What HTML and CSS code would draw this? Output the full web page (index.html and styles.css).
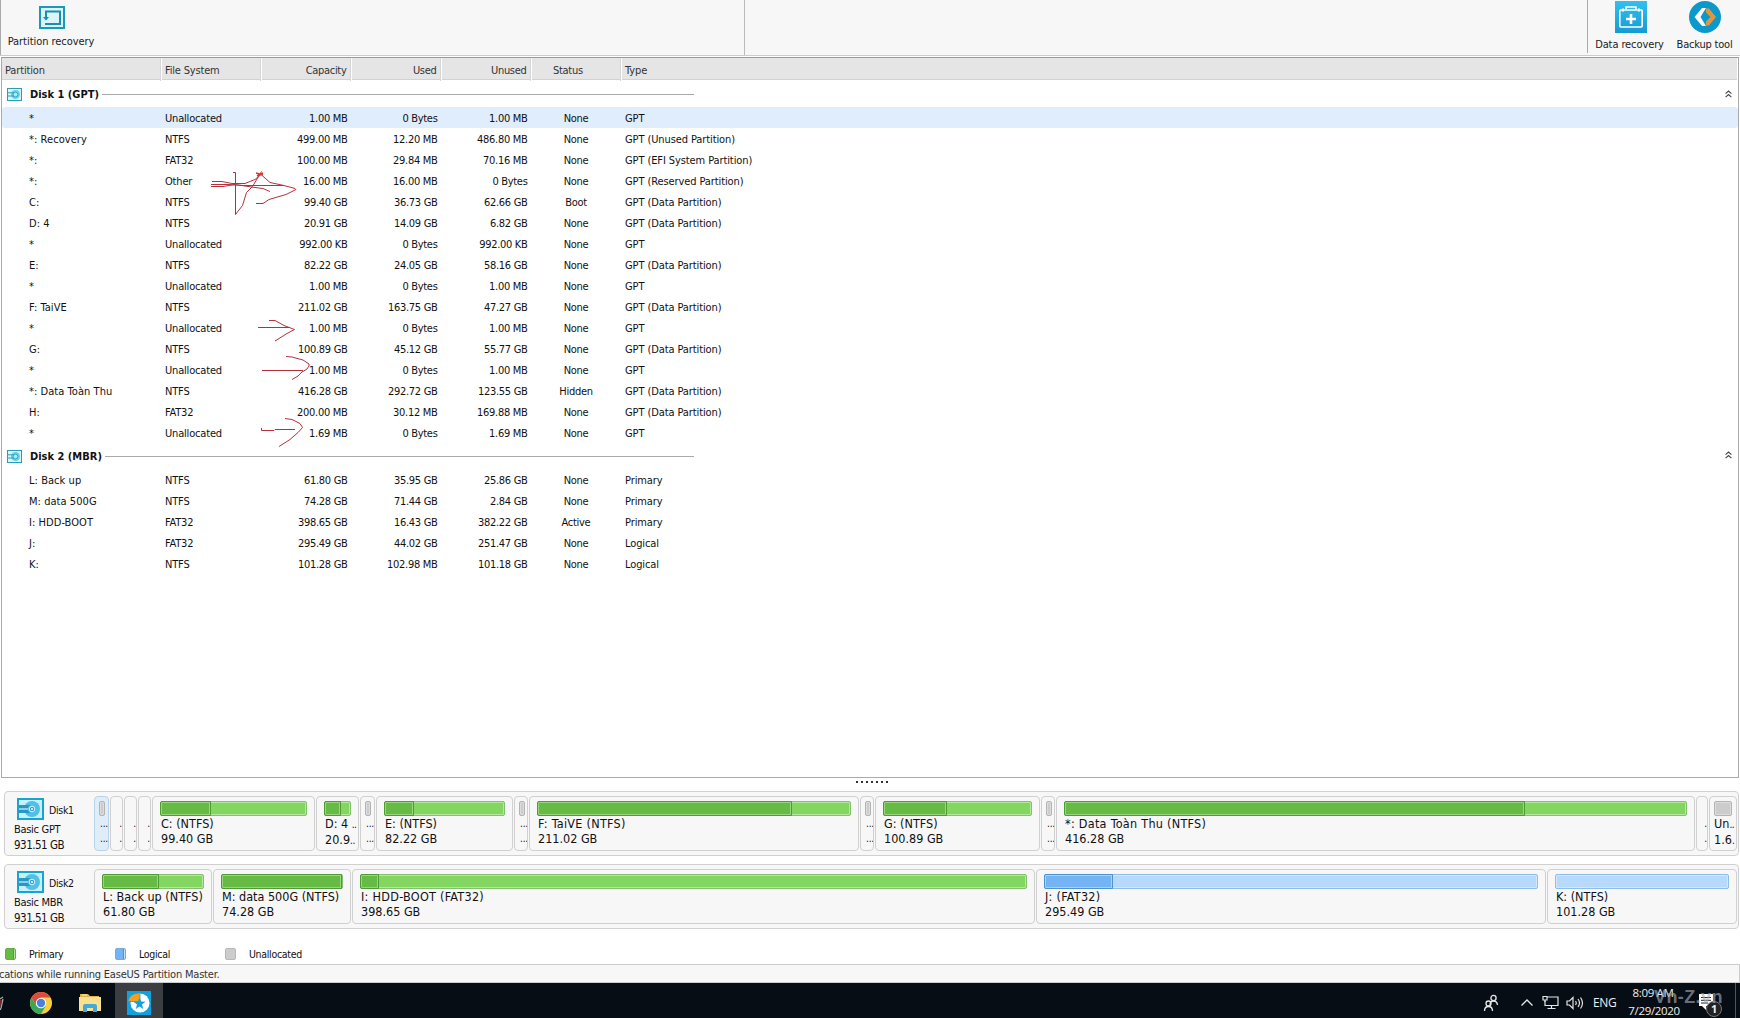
FILE: index.html
```html
<!DOCTYPE html>
<html lang="en">
<head>
<meta charset="utf-8">
<title>Partition Master</title>
<link rel="stylesheet" href="styles.css">
</head>
<body>
<svg class="defs" aria-hidden="true">
  <symbol id="disk" viewBox="0 0 27 22">
    <rect x="1" y="1" width="25" height="20" fill="#c4f1fc" stroke="#17a5cf" stroke-width="2"/>
    <circle cx="15" cy="11" r="8" fill="#54bfe6"/>
    <path d="M2 7h13v8H2z" fill="#2b96bf"/><path d="M2 11h11" stroke="#b5eafa" stroke-width="1.4"/>
    <circle cx="15" cy="11" r="4" fill="#54bfe6" /><circle cx="15" cy="11" r="2.8" fill="#2fa3d0" stroke="#d7f6ff" stroke-width="1"/><circle cx="15" cy="11" r="1" fill="#fff"/>
  </symbol>
  <symbol id="disk-small" viewBox="0 0 15 13">
    <rect x=".5" y=".5" width="14" height="12" fill="#d5f5fc" stroke="#2a9db5"/>
    <circle cx="8.5" cy="6.5" r="4.5" fill="#6fd0e8"/><path d="M1 4.8h7M1 8h7" stroke="#2a9db5"/><circle cx="8.5" cy="6.5" r="2.4" fill="#a9eaf7" stroke="#2fa9c6"/>
  </symbol>
  <symbol id="fold" viewBox="0 0 7 8"><path d="M.6 3.6 3.5 1l2.9 2.6M.6 7.2l2.9-2.6 2.9 2.6" fill="none" stroke="#444" stroke-width="1.1"/></symbol>
</svg>

<header class="toolbar">
  <div class="group group-left">
    <div class="tool tool-partition">
      <svg width="26" height="24" viewBox="0 0 26 24"><rect x="1" y="1" width="24" height="21" fill="#d9f5fa" stroke="#1c98b8" stroke-width="2"/><path d="M6 18h15V5.500H7v8" fill="none" stroke="#1c8eae" stroke-width="2"/><path d="M4 11l3 3.500 3-3.500z" fill="#1c8eae"/></svg>
      <span>Partition recovery</span>
    </div>
  </div>
  <div class="group group-mid"></div>
  <div class="group group-right">
    <div class="tool tool-data">
      <svg width="32" height="32" viewBox="0 0 32 32"><defs><linearGradient id="g" x1="0" y1="0" x2="0" y2="1"><stop offset="0" stop-color="#31c0f0"/><stop offset="1" stop-color="#169bd3"/></linearGradient></defs><rect width="32" height="32" fill="url(#g)"/><path d="M11 9V6h10v3" fill="none" stroke="#fff" stroke-width="1.6"/><rect x="4.800" y="9" width="22.400" height="17" rx="1" fill="none" stroke="#fff" stroke-width="1.600"/><path d="M8 7.500v3M24 7.500v3" stroke="#fff" stroke-width="2"/><path d="M16 13v10M11 18h10" stroke="#fff" stroke-width="2.600"/></svg>
      <span>Data recovery</span>
    </div>
    <div class="tool tool-backup">
      <svg width="32" height="32" viewBox="0 0 32 32"><circle cx="16" cy="16" r="16" fill="#0b98cb"/><path d="M17 7h-4l-7.500 9 7.500 9h4l-5.500-9z" fill="#fff"/><path d="M17 7.500h3l7 8.500-7 8.500h-3v-4l4.500-4.500-4.500-4.500z" fill="#e0963c"/></svg>
      <span>Backup tool</span>
    </div>
  </div>
</header>

<main class="panel">
  <div class="cols head"><span>Partition</span><span>File System</span><span>Capacity</span><span>Used</span><span>Unused</span><span>Status</span><span>Type</span></div>

  <div class="disk-title first"><div class="lead"><svg width="15" height="13"><use href="#disk-small"/></svg><b>Disk 1 (GPT)</b><i></i></div><svg class="fold" width="7" height="8"><use href="#fold"/></svg></div>
  <div class="cols row selected"><span>*</span><span>Unallocated</span><span>1.00 MB</span><span>0 Bytes</span><span>1.00 MB</span><span>None</span><span>GPT</span></div>
  <div class="cols row"><span>*: Recovery</span><span>NTFS</span><span>499.00 MB</span><span>12.20 MB</span><span>486.80 MB</span><span>None</span><span>GPT (Unused Partition)</span></div>
  <div class="cols row"><span>*:</span><span>FAT32</span><span>100.00 MB</span><span>29.84 MB</span><span>70.16 MB</span><span>None</span><span>GPT (EFI System Partition)</span></div>
  <div class="cols row"><span>*:</span><span>Other</span><span>16.00 MB</span><span>16.00 MB</span><span>0 Bytes</span><span>None</span><span>GPT (Reserved Partition)</span></div>
  <div class="cols row"><span>C:</span><span>NTFS</span><span>99.40 GB</span><span>36.73 GB</span><span>62.66 GB</span><span>Boot</span><span>GPT (Data Partition)</span></div>
  <div class="cols row"><span>D: 4</span><span>NTFS</span><span>20.91 GB</span><span>14.09 GB</span><span>6.82 GB</span><span>None</span><span>GPT (Data Partition)</span></div>
  <div class="cols row"><span>*</span><span>Unallocated</span><span>992.00 KB</span><span>0 Bytes</span><span>992.00 KB</span><span>None</span><span>GPT</span></div>
  <div class="cols row"><span>E:</span><span>NTFS</span><span>82.22 GB</span><span>24.05 GB</span><span>58.16 GB</span><span>None</span><span>GPT (Data Partition)</span></div>
  <div class="cols row"><span>*</span><span>Unallocated</span><span>1.00 MB</span><span>0 Bytes</span><span>1.00 MB</span><span>None</span><span>GPT</span></div>
  <div class="cols row"><span>F: TaiVE</span><span>NTFS</span><span>211.02 GB</span><span>163.75 GB</span><span>47.27 GB</span><span>None</span><span>GPT (Data Partition)</span></div>
  <div class="cols row"><span>*</span><span>Unallocated</span><span>1.00 MB</span><span>0 Bytes</span><span>1.00 MB</span><span>None</span><span>GPT</span></div>
  <div class="cols row"><span>G:</span><span>NTFS</span><span>100.89 GB</span><span>45.12 GB</span><span>55.77 GB</span><span>None</span><span>GPT (Data Partition)</span></div>
  <div class="cols row"><span>*</span><span>Unallocated</span><span>1.00 MB</span><span>0 Bytes</span><span>1.00 MB</span><span>None</span><span>GPT</span></div>
  <div class="cols row"><span>*: Data Toàn Thu</span><span>NTFS</span><span>416.28 GB</span><span>292.72 GB</span><span>123.55 GB</span><span>Hidden</span><span>GPT (Data Partition)</span></div>
  <div class="cols row"><span>H:</span><span>FAT32</span><span>200.00 MB</span><span>30.12 MB</span><span>169.88 MB</span><span>None</span><span>GPT (Data Partition)</span></div>
  <div class="cols row"><span>*</span><span>Unallocated</span><span>1.69 MB</span><span>0 Bytes</span><span>1.69 MB</span><span>None</span><span>GPT</span></div>

  <div class="disk-title"><div class="lead"><svg width="15" height="13"><use href="#disk-small"/></svg><b>Disk 2 (MBR)</b><i></i></div><svg class="fold" width="7" height="8"><use href="#fold"/></svg></div>
  <div class="cols row"><span>L: Back up</span><span>NTFS</span><span>61.80 GB</span><span>35.95 GB</span><span>25.86 GB</span><span>None</span><span>Primary</span></div>
  <div class="cols row"><span>M: data 500G</span><span>NTFS</span><span>74.28 GB</span><span>71.44 GB</span><span>2.84 GB</span><span>None</span><span>Primary</span></div>
  <div class="cols row"><span>I: HDD-BOOT</span><span>FAT32</span><span>398.65 GB</span><span>16.43 GB</span><span>382.22 GB</span><span>Active</span><span>Primary</span></div>
  <div class="cols row"><span>J:</span><span>FAT32</span><span>295.49 GB</span><span>44.02 GB</span><span>251.47 GB</span><span>None</span><span>Logical</span></div>
  <div class="cols row"><span>K:</span><span>NTFS</span><span>101.28 GB</span><span>102.98 MB</span><span>101.18 GB</span><span>None</span><span>Logical</span></div>
</main>

<div class="splitter"><i></i><i></i><i></i><i></i><i></i><i></i><i></i></div>

<section class="map">
  <div class="disk">
    <div class="info"><div class="name"><svg width="27" height="22"><use href="#disk"/></svg><span>Disk1</span></div><div>Basic GPT</div><div class="total">931.51 GB</div></div>
    <div class="parts parts-1">
      <div class="part tiny active"><div class="bar free"></div><p>...</p><p>...</p></div>
      <div class="part tiny"><p class="below">.</p><p>.</p></div>
      <div class="part tiny"><p class="below">.</p><p>.</p></div>
      <div class="part tiny"><p class="below">.</p><p>.</p></div>
      <div class="part"><div class="bar"><i style="width:51px"></i></div><p>C: (NTFS)</p><p>99.40 GB</p></div>
      <div class="part"><div class="bar"><i style="width:17px"></i></div><p>D: 4 <s>..</s></p><p>20.9<s>..</s></p></div>
      <div class="part tiny"><div class="bar free"></div><p>...</p><p>...</p></div>
      <div class="part"><div class="bar"><i style="width:30px"></i></div><p>E: (NTFS)</p><p>82.22 GB</p></div>
      <div class="part tiny"><div class="bar free"></div><p>...</p><p>...</p></div>
      <div class="part"><div class="bar"><i style="width:255px"></i></div><p class="wide">F: TaiVE (NTFS)</p><p>211.02 GB</p></div>
      <div class="part tiny"><div class="bar free"></div><p>...</p><p>...</p></div>
      <div class="part"><div class="bar"><i style="width:64px"></i></div><p>G: (NTFS)</p><p>100.89 GB</p></div>
      <div class="part tiny"><div class="bar free"></div><p>...</p><p>...</p></div>
      <div class="part"><div class="bar"><i style="width:461px"></i></div><p class="wide">*: Data Toàn Thu (NTFS)</p><p>416.28 GB</p></div>
      <div class="part tiny"><p class="below">.</p><p>.</p></div>
      <div class="part last"><div class="bar free"></div><p>Un<s>..</s></p><p>1.6<s>.</s></p></div>
    </div>
  </div>
  <div class="disk">
    <div class="info"><div class="name"><svg width="27" height="22"><use href="#disk"/></svg><span>Disk2</span></div><div>Basic MBR</div><div class="total">931.51 GB</div></div>
    <div class="parts parts-2">
      <div class="part"><div class="bar"><i style="width:57px"></i></div><p>L: Back up (NTFS)</p><p>61.80 GB</p></div>
      <div class="part"><div class="bar"><i style="width:121px"></i></div><p>M: data 500G (NTFS)</p><p>74.28 GB</p></div>
      <div class="part"><div class="bar"><i style="width:19px"></i></div><p class="wide">I: HDD-BOOT (FAT32)</p><p>398.65 GB</p></div>
      <div class="part"><div class="bar logical"><i style="width:69px"></i></div><p class="wide">J: (FAT32)</p><p>295.49 GB</p></div>
      <div class="part"><div class="bar logical"></div><p>K: (NTFS)</p><p>101.28 GB</p></div>
    </div>
  </div>
</section>

<div class="legend">
  <span><i class="swatch primary"></i>Primary</span>
  <span><i class="swatch logic"></i>Logical</span>
  <span><i class="swatch unalloc"></i>Unallocated</span>
</div>

<div class="statusbar"><span>cations while running EaseUS Partition Master.</span></div>

<footer class="taskbar">
  <svg class="edge" width="5" height="22" viewBox="0 0 5 22"><path d="M0 8l3-2M3 8L1 17 0 19" fill="none" stroke="#aaa" stroke-width="1.300"/><path d="M0 9h2l-1 6H0z" fill="#7b2b2b"/></svg>
  <svg class="chrome" width="22" height="22" viewBox="0 0 22 22"><circle cx="11" cy="11" r="11" fill="#f7cf3c"/><path d="M1.500 5.500A11 11 0 0 1 20.500 5.500H11L6.300 13.700z" fill="#dc4b3e"/><path d="M1.500 5.500A11 11 0 0 0 11 22l4.800-8.300H6.200z" fill="#3aa757"/><circle cx="11" cy="11" r="5.200" fill="#fff"/><circle cx="11" cy="11" r="4.200" fill="#4a7fe8"/></svg>
  <svg class="folder" width="22" height="20" viewBox="0 0 22 20"><path d="M1 1h8l2 2h9v3H1z" fill="#e0b447"/><path d="M3 2h5" stroke="#fff3c0"/><path d="M0 4h22v14H0z" fill="#fbe08f"/><path d="M4 19v-6q0-2 2-2h10q2 0 2 2v6h-4v-4H8v4z" fill="#43a9d8"/></svg>
  <div class="task"><svg width="24" height="24" viewBox="0 0 24 24"><rect width="24" height="24" fill="#10a2e0"/><circle cx="13" cy="12" r="9.500" fill="#fff"/><path d="M13 10.500V2.500C7 2 2 5 1.500 10.500z" fill="#f4a01c"/><path d="M1.500 10.500H13V2" fill="none" stroke="#10a2e0" stroke-width=".8"/><path d="M12.500 6.500l1.500 4 4.500.3-3.500 2.800 1.200 4.400-3.700-2.400L8.800 18l1.200-4.400-3.500-2.800 4.500-.3z" fill="#10a2e0"/></svg></div>
  <div class="tray">
    <svg width="16" height="18" viewBox="0 0 16 18" fill="none" stroke="#e6e6e6" stroke-width="1.300"><circle cx="10.500" cy="4" r="2.600"/><path d="M7 11q0-4 3.500-4T14.500 11"/><circle cx="5.500" cy="9.500" r="2.500"/><path d="M1.500 17q0-4.500 4-4.500t4 4.500"/></svg>
    <svg width="14" height="9" viewBox="0 0 14 9" fill="none" stroke="#e6e6e6" stroke-width="1.300"><path d="M1.500 7.500L7 2l5.500 5.500"/></svg>
    <svg width="17" height="15" viewBox="0 0 17 15" fill="none" stroke="#e6e6e6" stroke-width="1.200"><path d="M5 2h11v8.500H3V6M9.500 10.500v3M5.500 13.500h8"/><path d="M1 1.500h4V5H1zM3 5v2"/></svg>
    <svg width="18" height="14" viewBox="0 0 18 14" fill="none" stroke="#e6e6e6" stroke-width="1.200"><path d="M1 5h2.500L7 1.500v11L3.500 9H1zM9.500 5q1.500 2 0 4M12 3q3 4 0 8M14.500 1.500q4 5.500 0 11"/></svg>
    <span class="lang">ENG</span>
    <div class="clock"><span>8:09 AM</span><span>7/29/2020</span></div>
    <div class="notify"><svg width="15" height="17" viewBox="0 0 15 17"><path d="M0 0h14v12h-7v4l-4-4H0z" fill="#fff"/><path d="M2 3.500h10M2 6.300h10M2 9h7" stroke="#18202a"/></svg><b>1</b></div>
    <i class="desktop"></i>
  </div>
  <span class="watermark">Vn-Z.vn</span>
</footer>

<svg class="marks" width="120" height="290" viewBox="200 165 120 290" fill="none" stroke="#b5303c" stroke-width="1">
  <path d="M212 181.500h10l10 2h13l10-4 6-5 9 8 14 3 11 3 1 1-10 5-17 5-6 4h-7M211 184.500h17l15 1h41M211 186.500h12l12-2 20 3 8 1 7 3M233 172.500h2.500v42l7-9 4-13 6-6 9-15" />
  <path d="M256 173l7 2M257 176l6-3" stroke="#dd3528" stroke-width="1.600"/>
  <path d="M258 327.500h32M269 320.500h6l9 5 10.500 4-7.500 4-12 7.500M262 370.500h41M286 356.500l6 .5 11 3 6 4v2l-2 3-5 3-4 4-6 3.500M261.500 428v2.500h12.500l1-1h20M285 418.500l7 1 8 4 2.500 4-4.500 5-8 7-11 7"/>
</svg>
</body>
</html>
```
FILE: styles.css
```css
* { box-sizing: border-box; }
body {
  margin: 0; width: 1740px; height: 1018px; overflow: hidden; position: relative;
  display: flex; flex-direction: column; background: #fff; color: #111;
  font: 11px/13px "DejaVu Sans Condensed", "DejaVu Sans", sans-serif; font-stretch: condensed;
  letter-spacing: -0.3px;
}
.defs { position: absolute; width: 0; height: 0; }
svg { display: block; flex: none; }
p { margin: 0; }

.toolbar { height: 56px; display: flex; background: #f7f7f7; border-bottom: 1px solid #ccc; flex: none; }
.group-left { width: 745px; border-left: 1px solid #aaa; border-right: 1px solid #bbb; padding: 6px 0 0 7px; }
.group-mid { width: 843px; height: 53px; border-right: 1px solid #aaa; }
.group-right { display: flex; flex: 1; padding: 1px 0 0 7px; gap: 13px; }
.tool { display: flex; flex-direction: column; align-items: center; gap: 5px; white-space: nowrap; color: #222; }
.tool-partition { width: 86px; letter-spacing: -0.05px; }
.tool-partition svg { margin-right: -1px; }
.tool-data { width: 69px; }
.tool-data svg { margin-right: -2px; }
.tool-backup { width: 55px; }
.tool-data, .tool-backup { letter-spacing: -0.1px; }
.tool-backup { letter-spacing: -0.2px; }

.panel { flex: none; height: 721px; margin: 1px 1px 0; border: 1px solid #aaa; border-top-color: #999; }
.cols { display: grid; grid-template-columns: 160px 100px 90px 90px 90px 90px 1fr; align-items: center; white-space: nowrap; }
.cols > :nth-child(n+3):nth-child(-n+5) { text-align: right; padding-right: 4.500px; }
.cols > :nth-child(2), .cols > :nth-child(7) { padding-left: 3px; }
.cols > :nth-child(2) { letter-spacing: -0.18px; }
.cols > :nth-child(7) { letter-spacing: -0.1px; }
.head { height: 22px; background: #e5e5e5; border-bottom: 1px solid #d2d2d2; color: #333; margin-right: 1px; align-items: stretch; line-height: 21px; }
.head > span { border-right: 1px solid #fff; box-shadow: -1px 0 #d6d6d6 inset; padding-top: 2px; }
.head > :first-child { padding-left: 3px; letter-spacing: -0.15px; }
.head > :nth-child(6) { padding-left: 21px; }
.head > :last-child { border: 0; box-shadow: none; }
.disk-title { display: flex; align-items: center; justify-content: space-between; height: 26px; padding: 0 6px 0 5px; }
.first { height: 27px; padding-top: 2px; }
.lead { display: flex; align-items: center; width: 687px; }
.lead b { margin: 0 3px 0 8px; letter-spacing: 0; }
.lead i { height: 1px; background: #aaa; flex: 1; }
.fold { margin-bottom: 2px; }
.row { height: 21px; padding-top: 2px; }
.row > :first-child { padding-left: 27px; letter-spacing: 0.05px; }
.row > :nth-child(6) { text-align: center; padding-right: 2px; }
.selected { background: #e0edfd; border-radius: 3px; }

.splitter { flex: none; height: 13px; display: flex; gap: 3px; padding: 3px 0 0 856px; }
.splitter i { width: 2px; height: 2px; background: #333; }

.map { flex: none; display: flex; flex-direction: column; gap: 8px; padding: 0 1px 0 4px; }
.disk { display: flex; height: 65px; border: 1px solid #d0d0d0; border-radius: 4px; background: #f7f7f7; }
.info { width: 89px; padding: 6px 0 0 9px; display: flex; flex-direction: column; gap: 3px; }
.name { display: flex; align-items: center; height: 22px; gap: 5px; padding-left: 3px; font-size: 10.500px; }
.name span { padding-top: 2px; }
.total { font-size: 11.500px; letter-spacing: -0.5px; }
.parts { flex: 1; display: grid; gap: 1px; padding-top: 4px; }
.parts-1 { grid-template-columns: 15px 13px 13px 13px 163px 43px 15px 137px 14px 330px 14px 165px 14px 639px 12px 28px; }
.parts-2 { grid-template-columns: 118px 138px 683px 510px 190px; }
.part { height: 55px; border: 1px solid #d0d0d0; border-radius: 4px; padding: 4px 7px 0; white-space: nowrap; overflow: hidden; font-size: 12.500px; line-height: 15px; letter-spacing: 0; }
.part p { padding-left: 1px; }
.part .wide { letter-spacing: 0.28px; }
.part s { text-decoration: none; font-size: 10px; letter-spacing: -0.5px; }
.bar { height: 15px; display: flex; background: #83d660; border: 1px solid #85bf70; border-radius: 2px; box-shadow: inset 0 0 0 1px #b4e8a0; }
.bar i { margin: -1px 0 -1px -1px; border: 1px solid #529a38; border-radius: 2px 0 0 2px; background: #65bb43; box-shadow: inset 0 0 0 1px #99d581; }
.logical { background: #b6d9fc; border-color: #8dbde8; box-shadow: inset 0 0 0 1px #d2e8ff; }
.logical i { background: #74b3f4; border-color: #4d94cf; box-shadow: inset 0 0 0 1px #a8d2fc; }
.free { background: #ccc; border-color: #b3b3b3; box-shadow: inset 0 0 0 1px #ddd; }
.part.tiny { padding: 4px 0 0 4px; font-size: 10px; letter-spacing: -0.2px; }
.tiny .bar { width: 6px; }
.tiny p { text-align: right; }
.tiny .below { margin-top: 15px; }
.active { background: #dfedf9; border-color: #b9d3ea; }
.part.last { padding: 4px 0 0 4px; }
.last .bar { width: 18px; }
.last p { padding-left: 0; }

.legend { flex: none; display: flex; height: 35px; padding: 19px 0 0 5px; font-size: 10.500px; }
.legend span { width: 110px; height: 12px; display: flex; align-items: center; gap: 13px; }
.swatch { width: 11px; height: 12px; border: 1px solid; border-radius: 2px; }
.primary { background: linear-gradient(90deg, #65bb43 75%, #529a38 75% 85%, #b4e8a0 85%); border-color: #66a94d; }
.logic { background: linear-gradient(90deg, #74b3f4 75%, #4d94cf 75% 85%, #c7e2ff 85%); border-color: #76abd9; }
.unalloc { background: #ccc; border-color: #b8b8b8; }

.statusbar { flex: none; height: 19px; border: 1px solid #ccc; border-left: 0; background: #f7f7f7; color: #333; line-height: 19px; letter-spacing: -0.2px; }
.statusbar span { margin-left: -1px; }

.taskbar { flex: 1; position: relative; display: flex; align-items: flex-start; background: #070d14; color: #eee; font-family: "Open Sans", "Noto Sans", sans-serif; font-stretch: normal; }
.edge { margin-top: 8px; }
.chrome { margin: 9px 0 0 25px; }
.folder { margin: 10px 0 0 27px; }
.task { width: 48px; height: 35px; margin-left: 14px; padding: 8px 0 0 12px; background: #3a3d42; }
.tray { flex: 1; display: flex; align-items: center; height: 35px; padding-top: 4px; margin-left: 1320px; }
.tray > :nth-child(2) { margin-left: 21px; }
.tray > :nth-child(3) { margin-left: 8px; }
.tray > :nth-child(4) { margin-left: 7px; }
.lang { margin-left: 9px; width: 24px; font-size: 12px; letter-spacing: -0.4px; }
.clock { margin: -2px 0 0 11px; width: 52px; height: 35px; display: flex; flex-direction: column; align-items: center; line-height: 18px; font-size: 11.500px; letter-spacing: -0.35px; white-space: nowrap; }
.clock :first-child { margin-left: -2px; }
.notify { position: relative; margin-left: 19px; }
.notify b { position: absolute; left: 7px; top: 7px; width: 16px; height: 16px; border-radius: 50%; background: #222; border: 1px solid #777; font-size: 11px; line-height: 14px; text-align: center; }
.desktop { margin: -4px 4px 0 auto; width: 1px; height: 35px; background: #555; }
.watermark { position: absolute; left: 1654px; top: 4px; font: bold 18px/20px "Liberation Sans", sans-serif; letter-spacing: 0.4px; color: rgba(165, 170, 178, 0.65); }

.marks { position: absolute; left: 200px; top: 165px; }
```
